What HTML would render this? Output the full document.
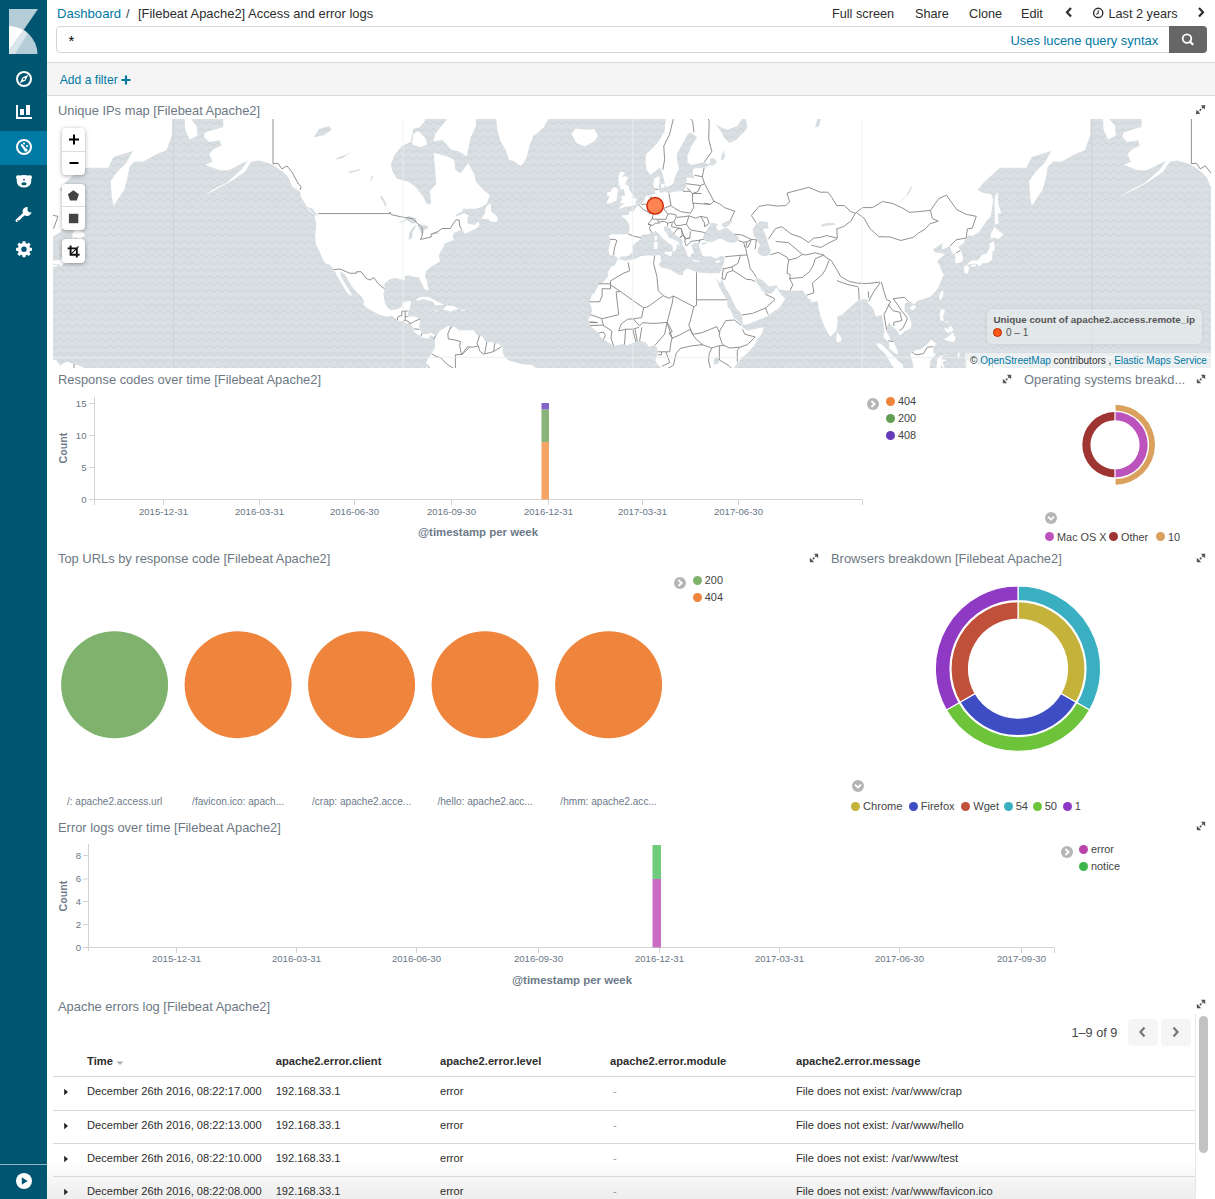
<!DOCTYPE html>
<html><head><meta charset="utf-8">
<style>
*{box-sizing:border-box}
html,body{margin:0;padding:0}
body{width:1215px;height:1199px;overflow:hidden;position:relative;background:#fff;font-family:"Liberation Sans",sans-serif;color:#3f3f3f}
.a{position:absolute;white-space:nowrap}
.nav{position:absolute;left:0;top:0;width:47px;height:1199px;background:#005571}
.navact{position:absolute;left:0;top:131px;width:47px;height:34px;background:#0079a5}
.navsep{position:absolute;left:0;top:1164px;width:47px;height:1px;background:#2b7b95}
.ptitle{position:absolute;white-space:nowrap;font-size:12.9px;line-height:13px;color:#6d7883}
.tick{font-size:9.6px;line-height:10px;color:#697786}
.expand{position:absolute;width:10px;height:10px}
.leg{position:absolute;white-space:nowrap;font-size:10.4px;line-height:11px;color:#3f3f3f}
.dot{position:absolute;width:9px;height:9px;border-radius:50%}
.tog{position:absolute;width:12px;height:12px;border-radius:50%;background:#b4b4b4}
</style></head><body>
<!-- SIDEBAR -->
<div class="nav"></div>
<div class="navact"></div>
<div class="navsep"></div>
<svg class="a" style="left:0;top:0" width="47" height="1199" viewBox="0 0 47 1199">
  <!-- logo -->
  <path d="M9 9 L38 9 L23.6 30 Q16.5 26 9 26 Z" fill="#b5cdd6"/>
  <path d="M9 26 A28.5 28.5 0 0 1 37.5 54 L9 54 Z" fill="#b5cdd6"/>
  <path d="M9 26 Q16.5 26 23.6 30 L9 50 Z" fill="#ffffff"/>
  <path d="M23.6 30 Q25.8 31.6 27.5 34 L15 54 L9 54 L9 50 Z" fill="#d9e5ea"/>
  <!-- compass -->
  <circle cx="24" cy="79" r="7" fill="none" stroke="#fff" stroke-width="2"/>
  <path d="M28.2 74.8 L25.6 80.6 L19.8 83.2 L22.4 77.4 Z" fill="#fff"/>
  <circle cx="24" cy="79" r="1" fill="#005571"/>
  <!-- bar chart -->
  <path d="M16 105 L18 105 L18 117 L32 117 L32 119 L16 119 Z" fill="#fff"/>
  <rect x="20" y="109" width="4" height="6" fill="#fff"/>
  <rect x="26" y="105" width="4" height="10" fill="#fff"/>
  <!-- dashboard -->
  <circle cx="24" cy="147" r="7" fill="none" stroke="#fff" stroke-width="2"/>
  <path d="M20.5 145 L22 143.8 L25.8 148.2 A1.8 1.8 0 1 1 24 150 Z" fill="#fff"/>
  <circle cx="24" cy="143.5" r="1.1" fill="#fff"/>
  <circle cx="27" cy="146" r="1.1" fill="#fff"/>
  <!-- bear -->
  <path d="M16.3 176 Q17 175 19.5 175.5 Q24 174.5 28.5 175.5 Q31 175 31.7 176 Q32.3 178 31.2 179.5 Q31.5 184 29 186 Q24 189 19 186 Q16.5 184 16.8 179.5 Q15.7 178 16.3 176 Z" fill="#fff"/>
  <ellipse cx="24" cy="183.8" rx="2.6" ry="1.5" fill="#005571"/>
  <ellipse cx="24" cy="179.8" rx="1.2" ry="0.7" fill="#005571"/>
  <!-- wrench -->
  <path d="M17 220.5 L24.5 213.5" stroke="#fff" stroke-width="3" stroke-linecap="round"/>
  <path d="M27.5 207 A4.5 4.5 0 1 0 31.5 212 L29.5 212.4 L27.4 210.5 L27.7 208.5 Z" fill="#fff"/>
  <circle cx="18" cy="220.7" r="0.7" fill="#005571"/>
  <!-- gear -->
  <g transform="translate(24 249.3)" fill="#fff">
    <circle r="6.2"/>
    <rect x="-1.6" y="-8" width="3.2" height="16" rx="0.8"/>
    <rect x="-1.6" y="-8" width="3.2" height="16" rx="0.8" transform="rotate(45)"/>
    <rect x="-1.6" y="-8" width="3.2" height="16" rx="0.8" transform="rotate(90)"/>
    <rect x="-1.6" y="-8" width="3.2" height="16" rx="0.8" transform="rotate(135)"/>
    <circle r="2.7" fill="#005571"/>
  </g>
  <!-- play -->
  <circle cx="24" cy="1181" r="8" fill="#fff"/>
  <path d="M21.8 1177.3 L27.6 1181 L21.8 1184.7 Z" fill="#005571"/>
</svg>

<!-- HEADER -->
<div class="a" style="left:57px;top:7px;font-size:13.1px;line-height:14px;color:#0079a5">Dashboard</div>
<div class="a" style="left:126px;top:7px;font-size:13px;line-height:14px;color:#3f3f3f">/</div>
<div class="a" style="left:138px;top:7px;font-size:12.95px;line-height:14px;color:#2d2d2d">[Filebeat Apache2] Access and error logs</div>
<div class="a" style="left:832px;top:7px;font-size:12.7px;line-height:14px;color:#2d2d2d">Full screen</div>
<div class="a" style="left:915px;top:7px;font-size:12.7px;line-height:14px;color:#2d2d2d">Share</div>
<div class="a" style="left:969px;top:7px;font-size:12.7px;line-height:14px;color:#2d2d2d">Clone</div>
<div class="a" style="left:1021px;top:7px;font-size:12.7px;line-height:14px;color:#2d2d2d">Edit</div>
<div class="a" style="left:1108.5px;top:7px;font-size:12.7px;line-height:14px;color:#2d2d2d">Last 2 years</div>
<svg class="a" style="left:1060px;top:4px" width="155" height="18" viewBox="1060 4 155 18">
  <path d="M1071 8 L1067 12.3 L1071 16.6" fill="none" stroke="#2d2d2d" stroke-width="2.2"/>
  <path d="M1199 8 L1203 12.3 L1199 16.6" fill="none" stroke="#2d2d2d" stroke-width="2.2"/>
  <circle cx="1098.2" cy="12.9" r="4.6" fill="none" stroke="#2d2d2d" stroke-width="1.4"/>
  <path d="M1098.2 10.3 L1098.2 13.2 L1096.2 14.4" fill="none" stroke="#2d2d2d" stroke-width="1.1"/>
</svg>
<!-- query bar -->
<div class="a" style="left:56px;top:26px;width:1116px;height:27px;border:1px solid #d4d4d4;border-radius:4px 0 0 4px;background:#fff"></div>
<div class="a" style="left:68.5px;top:32.5px;font-size:15px;line-height:15px;color:#000">*</div>
<div class="a" style="left:1010.5px;top:34px;font-size:12.9px;line-height:14px;color:#0079a5">Uses lucene query syntax</div>
<div class="a" style="left:1169px;top:26px;width:38px;height:27px;background:#666;border-radius:0 4px 4px 0"></div>
<svg class="a" style="left:1178px;top:30px" width="20" height="20" viewBox="0 0 20 20">
  <circle cx="9" cy="8.6" r="4.3" fill="none" stroke="#fff" stroke-width="1.8"/>
  <path d="M12 11.6 L14.6 14.2" stroke="#fff" stroke-width="2.2" stroke-linecap="round"/>
</svg>
<!-- filter bar -->
<div class="a" style="left:47px;top:62px;width:1168px;height:34px;background:#f5f5f5;border-top:1px solid #d9d9d9;border-bottom:1px solid #d9d9d9"></div>
<div class="a" style="left:59.7px;top:74px;font-size:12.15px;line-height:13px;color:#0079a5">Add a filter</div>
<svg class="a" style="left:120.5px;top:74.5px" width="10" height="10" viewBox="0 0 10 10"><path d="M5 0.5 V9.5 M0.5 5 H9.5" stroke="#0079a5" stroke-width="2.2"/></svg>

<!-- MAP PANEL -->
<div class="ptitle" style="left:58px;top:104px">Unique IPs map [Filebeat Apache2]</div>
<div class="a" style="left:53px;top:119px;width:1158px;height:249px;overflow:hidden;background:#d5dbde">
<svg style="position:absolute;left:0;top:0" width="1158" height="249" viewBox="53 119 1158 249">
<rect x="53" y="119" width="1158" height="249" fill="url(#wav)"/>
<defs><pattern id="wav" patternUnits="userSpaceOnUse" width="8.3" height="7" x="0" y="0"><rect width="8.3" height="7" fill="#d9dfe2"/><path d="M-0.1 4.2 Q2.07 1.6 4.15 4.2 T8.4 4.2" fill="none" stroke="#d0d7db" stroke-width="1.1"/></pattern>
<g id="wld">
<path d="M223.3 61.0 L223.2 126.9 L205.5 132.3 L203.8 136.7 L209.1 142.0 L219.7 140.3 L221.5 145.6 L212.6 150.0 L209.1 154.4 L212.6 161.5 L205.5 165.0 L219.7 170.3 L228.5 170.3 L235.6 166.8 L248.0 160.6 L240.9 170.3 L226.8 182.7 L212.6 189.8 L202.0 196.9 L205.5 195.1 L228.5 182.7 L244.5 172.1 L251.6 161.5 L258.6 160.6 L269.3 163.3 L276.8 167.4 L283.2 172.3 L288.3 177.2 L292.1 186.4 L300.3 191.7 L301.1 197.3 L306.2 205.6 L306.2 206.4 L313.8 214.0 L314.6 215.9 L316.4 223.8 L315.1 236.3 L315.9 244.5 L320.2 253.1 L321.7 256.9 L325.0 263.2 L330.4 265.1 L334.0 269.3 L336.8 275.6 L341.4 282.9 L346.5 292.0 L352.3 297.3 L351.1 293.7 L346.5 285.8 L341.9 278.6 L339.8 271.7 L344.4 273.5 L349.8 283.2 L354.6 290.1 L361.3 296.5 L364.1 301.2 L363.3 304.5 L366.6 307.7 L373.8 311.8 L377.9 313.9 L386.5 316.8 L391.6 315.5 L397.5 320.0 L405.7 322.9 L409.5 323.9 L413.3 327.9 L413.8 331.8 L419.4 335.6 L424.8 338.2 L428.6 338.7 L429.9 334.9 L433.7 336.4 L435.0 339.5 L435.0 347.2 L431.7 353.6 L428.4 357.4 L426.1 363.0 L428.6 365.1 L425.3 368.9 L426.1 377.9 L543.4 377.9 L543.4 371.5 L538.3 369.7 L531.9 365.1 L526.8 364.8 L520.5 363.8 L509.0 360.5 L505.2 357.4 L502.6 352.3 L502.6 347.2 L498.8 344.1 L492.4 342.3 L486.0 342.1 L482.2 336.4 L477.6 335.6 L473.3 330.2 L469.4 330.2 L464.3 330.2 L459.2 330.5 L454.1 326.6 L450.0 329.2 L449.0 325.5 L443.9 328.6 L440.1 330.7 L436.8 335.6 L435.0 335.1 L431.2 333.0 L427.3 334.1 L423.5 334.3 L419.7 329.7 L419.2 325.2 L420.5 318.7 L413.3 316.3 L407.7 316.8 L407.7 312.0 L409.5 309.4 L411.3 301.2 L406.9 301.2 L402.3 302.6 L401.8 306.7 L398.0 309.1 L391.6 310.2 L387.8 308.0 L384.7 302.6 L383.5 294.3 L384.7 288.9 L384.2 283.8 L390.4 279.1 L395.5 278.0 L400.6 279.4 L405.2 280.0 L404.4 276.5 L408.2 275.3 L414.6 277.1 L418.4 277.1 L422.0 283.5 L424.0 288.4 L427.6 290.9 L428.4 289.2 L427.1 281.5 L425.0 275.6 L426.3 271.1 L431.2 266.6 L434.0 265.1 L440.1 261.3 L438.8 255.6 L440.6 251.5 L443.7 246.5 L443.9 243.9 L449.0 241.8 L454.1 239.8 L452.6 237.0 L453.6 233.2 L461.8 229.3 L465.1 233.9 L477.1 227.8 L479.6 224.9 L478.4 221.2 L474.5 224.9 L467.7 223.4 L467.4 218.2 L468.9 215.5 L464.3 213.2 L456.7 216.3 L455.7 215.1 L462.3 211.2 L463.1 208.8 L475.8 208.8 L482.2 206.8 L486.8 203.6 L489.8 195.2 L482.2 188.7 L475.8 181.8 L474.5 174.8 L468.2 163.3 L460.5 173.3 L455.4 169.9 L454.1 159.7 L449.0 157.0 L433.7 152.7 L434.7 164.9 L436.3 184.1 L429.9 190.9 L431.2 203.6 L427.3 204.4 L423.5 197.3 L415.9 187.3 L408.2 181.8 L396.7 178.6 L392.4 170.9 L390.9 164.9 L394.2 155.4 L401.8 146.0 L410.8 141.9 L413.3 129.1 L419.7 127.2 L424.8 121.3 L426.1 61.0ZM520.7 165.9 L523.0 163.8 L526.8 157.0 L529.4 146.0 L533.2 135.9 L536.8 133.5 L543.4 127.8 L549.8 116.6 L568.9 111.0 L568.9 61.0 L479.6 61.0 L492.4 103.7 L496.2 117.9 L497.5 131.0 L500.8 141.9 L505.2 148.8 L509.0 159.7 L514.1 161.2 L517.9 164.3ZM576.6 143.1 L571.5 134.1 L575.3 128.5 L586.8 129.7 L594.4 129.1 L598.0 135.9 L594.4 141.3 L585.0 146.5 L579.1 144.2ZM475.8 125.9 L470.7 137.2 L467.7 151.6 L466.9 156.5 L459.2 151.6 L451.6 149.9 L442.7 140.1 L433.7 141.3 L435.0 134.1 L446.5 120.0 L446.5 61.0 L477.1 61.0ZM427.3 144.2 L421.0 147.1 L412.0 144.8 L413.3 134.1 L418.4 131.0 L424.8 137.2ZM481.4 218.9 L484.7 213.6 L486.0 206.8 L490.9 203.2 L491.1 211.6 L496.0 215.5 L498.3 219.3 L496.2 222.3 L490.1 221.2 L488.6 218.9ZM415.9 300.1 L418.4 297.9 L422.5 296.8 L428.6 297.1 L435.0 300.4 L439.6 302.6 L443.7 304.8 L435.3 305.6 L432.4 301.2 L427.3 300.4 L423.5 299.0 L418.4 300.4ZM442.7 309.6 L447.0 305.6 L454.1 306.1 L458.5 309.1 L454.4 309.9 L450.3 311.8 L446.5 310.2ZM433.0 309.9 L438.3 310.7 L435.8 311.5ZM461.3 309.4 L465.4 309.9 L464.3 310.7 L461.3 310.7ZM306.2 206.4 L312.5 208.4 L318.2 215.9 L314.6 215.1 L308.7 210.4ZM645.5 61.0 L668.4 111.0 L665.9 117.9 L664.6 131.0 L659.5 140.1 L653.1 147.7 L646.0 154.3 L645.5 162.3 L646.7 169.9 L650.6 174.8 L656.9 169.9 L659.5 167.4 L661.3 169.9 L662.8 174.8 L664.8 183.2 L665.9 186.9 L669.7 186.0 L673.5 183.2 L674.8 177.2 L679.1 168.4 L677.3 162.3 L676.8 154.3 L681.2 146.0 L687.5 134.7 L690.1 132.3 L697.2 137.2 L691.4 146.0 L687.5 155.4 L687.5 162.3 L691.1 164.9 L696.5 163.8 L704.1 162.3 L709.7 164.9 L705.4 167.4 L693.9 168.4 L692.6 171.9 L694.4 178.6 L686.8 177.2 L686.3 184.1 L686.5 185.5 L683.7 190.9 L680.4 191.3 L673.5 191.7 L668.9 193.5 L664.6 191.3 L660.5 193.3 L658.2 189.5 L659.5 182.8 L659.7 176.2 L658.0 176.7 L653.9 179.1 L653.4 186.0 L654.6 189.1 L655.4 193.5 L650.6 195.2 L645.5 196.1 L644.7 199.4 L641.6 204.0 L639.1 205.2 L636.8 206.4 L633.0 211.6 L629.4 211.2 L628.9 214.7 L620.7 215.5 L626.3 220.1 L629.6 224.9 L629.4 230.3 L628.6 234.2 L623.0 234.2 L611.3 234.2 L609.0 235.6 L610.5 241.8 L608.5 250.2 L609.7 255.6 L613.6 255.0 L616.6 257.2 L618.4 258.8 L621.5 256.6 L627.6 256.3 L630.9 253.7 L633.2 249.8 L631.9 247.5 L634.7 243.5 L638.3 241.2 L640.9 238.4 L640.6 235.6 L644.2 234.2 L646.5 234.6 L651.3 233.2 L655.4 230.7 L659.0 233.9 L662.0 237.7 L664.6 240.1 L668.9 243.2 L672.5 245.5 L672.8 251.8 L675.0 250.8 L676.6 248.8 L676.6 244.2 L679.9 245.5 L678.6 241.8 L673.5 239.4 L668.9 237.7 L667.4 233.9 L664.1 230.3 L664.1 226.7 L667.6 226.4 L667.4 228.5 L669.7 227.5 L673.5 233.9 L678.6 237.0 L682.2 239.8 L682.4 244.2 L684.2 247.5 L686.3 251.5 L687.8 256.3 L690.1 257.6 L691.4 254.0 L693.9 252.4 L691.1 245.2 L695.2 242.8 L699.0 243.2 L699.5 247.5 L701.1 251.1 L702.3 255.6 L704.6 256.6 L710.8 256.3 L715.6 258.5 L720.7 256.3 L724.5 256.3 L724.3 260.4 L723.3 265.1 L721.7 268.7 L719.9 273.2 L721.7 278.6 L725.8 288.7 L729.6 294.3 L732.7 301.2 L736.0 308.0 L741.4 313.6 L743.2 324.7 L747.5 324.5 L755.1 321.3 L765.9 317.1 L773.0 312.0 L778.6 308.3 L781.9 303.9 L785.2 298.5 L781.9 295.4 L776.3 287.5 L773.8 290.9 L771.2 293.7 L764.3 293.7 L763.3 288.4 L762.3 292.3 L760.2 287.2 L756.4 282.1 L755.1 278.6 L756.4 277.4 L761.0 279.4 L762.3 280.3 L769.2 286.4 L776.3 285.2 L778.9 289.5 L789.6 290.9 L802.6 290.4 L803.6 292.0 L806.2 295.1 L808.2 298.7 L810.0 298.7 L811.8 302.6 L817.9 300.9 L818.4 308.0 L821.0 317.4 L823.5 324.2 L827.3 332.0 L830.4 336.7 L832.2 334.6 L836.3 331.0 L837.5 323.7 L837.3 316.6 L842.6 314.4 L847.0 309.9 L854.4 303.4 L858.0 300.4 L863.6 299.3 L866.9 299.0 L868.2 303.4 L873.0 308.5 L875.8 316.6 L881.7 314.7 L883.2 322.6 L884.5 331.8 L883.5 337.2 L888.6 342.1 L889.3 348.5 L891.1 350.3 L896.7 354.1 L898.5 353.8 L896.2 347.7 L893.4 341.5 L890.4 339.8 L888.6 335.6 L885.8 331.0 L887.5 325.2 L889.1 322.6 L891.1 325.0 L896.7 330.2 L900.0 335.4 L904.9 331.0 L911.3 327.9 L911.3 321.8 L909.0 316.0 L904.4 310.7 L904.9 303.4 L909.5 300.9 L914.1 304.5 L917.1 300.9 L922.2 299.3 L929.9 297.1 L934.2 292.9 L937.5 288.7 L940.1 282.9 L943.7 274.7 L941.1 269.3 L939.3 264.1 L937.0 262.0 L939.6 258.8 L945.2 254.4 L940.4 253.1 L935.0 252.4 L933.0 249.5 L937.5 246.5 L942.6 242.8 L941.9 249.8 L949.8 246.2 L952.1 253.1 L955.4 254.0 L955.1 262.6 L958.0 263.2 L962.3 261.3 L963.1 257.2 L960.8 250.8 L958.0 246.5 L963.6 243.2 L966.1 238.1 L969.2 235.3 L972.2 236.3 L978.4 232.5 L985.2 223.1 L990.9 215.9 L993.2 199.9 L991.1 193.9 L983.5 193.0 L977.6 190.0 L984.0 182.3 L991.1 175.7 L1000.0 167.7 L1026.5 167.7 L1031.9 157.1 L1051.3 150.9 L1044.3 163.3 L1035.4 172.1 L1029.2 181.0 L1030.1 196.9 L1031.9 205.7 L1042.5 189.8 L1046.0 177.4 L1047.8 166.8 L1053.1 161.5 L1062.0 161.5 L1074.3 154.4 L1085.0 150.0 L1090.3 134.9 L1090.6 61.0ZM1102.7 111.0 L1115.0 126.1 L1115.9 135.8 L1108.0 139.4 L1103.5 129.6ZM617.6 259.5 L615.1 265.1 L610.8 267.2 L607.7 272.6 L608.2 275.9 L603.4 282.1 L599.0 284.4 L594.4 292.9 L591.9 295.1 L589.3 302.6 L591.4 306.7 L591.9 310.7 L590.6 316.0 L588.1 319.5 L589.8 322.6 L590.1 325.8 L593.2 328.6 L595.7 330.5 L599.0 333.0 L600.8 337.4 L604.6 340.0 L608.5 342.6 L613.3 346.2 L622.5 344.1 L627.6 345.1 L632.2 343.3 L636.5 341.5 L639.1 341.0 L641.4 341.0 L645.5 342.3 L648.5 346.4 L651.8 345.9 L653.9 344.9 L656.9 347.4 L657.7 351.0 L656.9 354.8 L656.4 357.4 L655.1 360.0 L657.4 364.5 L660.8 367.4 L663.3 370.2 L663.3 377.9 L733.0 377.9 L733.0 372.7 L734.0 367.7 L737.0 363.3 L741.1 358.7 L748.3 352.3 L753.9 345.9 L757.7 339.5 L762.3 333.0 L763.6 327.1 L757.7 328.4 L747.5 330.7 L742.6 327.6 L741.9 325.2 L737.3 320.0 L733.5 317.4 L730.9 310.7 L727.6 306.4 L726.8 299.8 L723.5 294.6 L719.4 287.2 L715.9 277.4 L720.2 283.5 L721.7 278.6 L719.9 273.2 L715.1 273.2 L709.0 273.5 L697.0 272.3 L693.9 270.8 L687.5 268.4 L684.0 270.8 L682.4 275.6 L678.6 274.7 L671.7 270.2 L666.4 268.4 L661.0 267.5 L658.5 264.4 L661.0 261.3 L660.5 256.0 L658.2 254.7 L654.6 256.0 L649.3 255.3 L640.4 256.3 L634.0 259.5 L631.2 259.8 L625.3 261.0 L619.2 259.1ZM618.2 209.2 L622.0 208.0 L625.0 206.8 L629.4 206.4 L636.3 204.8 L635.0 203.6 L637.2 199.4 L633.5 197.8 L633.0 194.8 L629.6 190.4 L628.6 186.0 L625.0 184.1 L626.1 181.8 L628.1 177.2 L624.8 176.2 L622.0 177.2 L625.0 171.9 L619.9 171.9 L618.2 177.2 L618.7 182.8 L618.4 187.3 L620.5 184.6 L619.9 189.5 L623.8 189.1 L624.5 192.6 L625.0 196.1 L621.0 196.1 L621.5 198.2 L622.5 199.4 L619.4 201.9 L622.5 203.2 L625.0 203.6 L622.0 204.8ZM616.6 200.7 L617.1 196.1 L618.4 190.9 L616.9 187.8 L614.1 186.9 L611.0 189.5 L611.0 191.7 L607.2 192.2 L607.2 195.6 L609.7 196.5 L607.4 201.1 L606.4 202.4 L608.2 203.6 L611.0 203.2 L613.6 201.5ZM966.6 265.1 L968.2 263.2 L972.0 260.4 L978.4 260.1 L981.7 255.0 L986.0 254.0 L987.3 252.8 L989.8 247.5 L989.8 243.2 L993.7 241.2 L994.7 245.9 L994.7 250.2 L992.4 251.5 L992.4 256.6 L991.9 259.8 L989.3 262.0 L986.8 263.2 L982.2 263.2 L981.9 264.1 L979.1 266.6 L977.3 264.1 L973.3 263.8 L969.4 264.4ZM964.3 266.6 L963.8 268.7 L964.8 273.2 L966.9 274.1 L968.4 271.7 L969.2 267.5 L966.9 265.1ZM970.7 267.2 L976.3 265.7 L975.8 264.4 L972.0 264.7ZM989.8 240.8 L991.1 237.0 L990.6 234.6 L994.4 226.7 L998.8 231.1 L1003.9 234.6 L998.3 239.1 L993.7 237.4 L991.4 238.4ZM994.9 224.9 L998.8 223.1 L997.5 213.6 L1001.3 213.6 L998.3 203.6 L997.5 191.3 L995.5 195.2 L994.4 201.5 L994.9 217.4 L994.7 224.2ZM939.3 298.5 L939.1 295.7 L941.4 290.9 L943.7 291.5 L942.6 297.1 L940.9 300.1ZM909.7 307.5 L913.3 305.0 L915.9 306.1 L914.6 309.1 L912.0 310.2ZM940.4 309.4 L944.7 309.6 L944.4 313.4 L942.9 316.6 L943.9 321.1 L949.5 323.9 L947.2 321.6 L942.6 320.8 L940.4 320.5 L939.6 316.0ZM943.9 327.1 L947.7 329.2 L950.3 325.2 L953.4 329.2 L951.6 331.8 L947.7 333.0 L945.2 330.5ZM943.9 339.5 L947.7 336.9 L952.9 332.5 L955.7 338.7 L954.1 342.1 L949.0 341.3ZM910.8 353.6 L912.3 352.3 L915.9 350.3 L921.0 349.2 L927.3 344.1 L931.2 339.5 L936.8 343.9 L933.7 346.2 L933.2 352.3 L936.0 354.8 L932.4 357.4 L930.4 361.2 L929.9 366.3 L928.6 372.7 L913.3 372.7 L913.3 365.1 L912.3 361.2 L910.5 356.1ZM875.8 343.1 L881.4 344.1 L888.6 351.0 L897.2 360.0 L903.1 365.1 L903.1 372.7 L899.3 372.7 L891.6 365.1 L888.6 359.4 L884.5 353.1 L878.6 347.7ZM936.3 370.2 L937.3 358.7 L940.1 356.1 L951.6 353.6 L943.9 354.8 L941.4 359.4 L947.2 360.0 L942.6 362.0 L945.2 370.2 L941.4 365.1 L939.8 371.5ZM966.9 360.5 L974.5 359.7 L978.4 365.8 L984.7 361.5 L992.4 364.0 L1001.3 367.1 L1005.1 370.2 L1010.2 372.7 L966.9 372.7ZM958.0 352.3 L959.7 353.6 L959.2 357.4 L958.5 359.4 L957.4 356.1ZM836.3 342.1 L836.5 335.6 L837.3 332.3 L839.8 335.6 L841.6 338.7 L840.6 341.5 L838.3 342.3ZM664.3 252.1 L672.5 251.5 L671.2 256.6 L664.6 253.7ZM653.6 242.5 L657.7 241.8 L657.2 248.8 L654.4 249.5ZM654.6 236.0 L656.9 235.6 L656.9 239.4 L655.9 241.2 L654.6 239.4ZM692.6 260.1 L699.8 261.0 L699.0 262.0 L692.9 261.3ZM715.1 261.6 L721.0 259.8 L719.4 262.3 L715.9 262.9ZM660.8 184.6 L664.8 184.1 L664.3 187.8 L661.3 187.8Z" fill="#fff"/>
<path d="M752.6 230.3 L755.1 224.9 L759.0 221.9 L760.2 221.2 L767.9 221.9 L768.4 228.5 L763.3 228.5 L763.6 230.3 L766.6 237.4 L767.9 243.2 L770.5 249.8 L770.5 254.7 L762.8 256.6 L758.7 254.0 L757.4 251.1 L760.0 244.5 L756.4 239.8 L753.9 235.6ZM706.7 241.8 L713.1 241.8 L718.2 239.1 L722.0 239.1 L728.4 242.5 L734.0 242.5 L738.6 240.8 L738.8 237.0 L734.0 233.9 L729.1 229.6 L726.1 227.8 L723.3 228.5 L719.4 230.7 L717.9 230.0 L715.6 227.1 L718.4 224.9 L714.3 223.1 L711.3 223.1 L708.5 227.5 L705.7 231.4 L703.9 234.9 L702.9 237.4 L704.9 240.8ZM721.5 224.9 L723.3 227.1 L726.1 227.5 L730.1 224.2 L732.7 220.4 L728.4 220.8 L722.8 223.1ZM700.3 244.5 L702.9 242.7 L706.7 242.5 L707.4 243.5 L704.1 244.5ZM715.4 123.9 L720.7 127.2 L727.1 129.7 L737.3 125.9 L744.9 114.5 L747.5 127.8 L744.9 131.0 L736.0 140.1 L729.6 143.1 L724.5 138.4 L721.5 132.3ZM815.1 127.8 L818.9 126.5 L821.5 117.9 L824.0 88.0 L816.4 88.0 L817.6 117.9ZM397.8 222.3 L403.1 221.2 L408.2 215.5 L415.9 218.2 L417.1 223.1 L412.0 223.4 L406.9 220.1 L401.8 222.7ZM408.5 240.1 L409.5 232.1 L414.6 225.6 L416.4 225.6 L412.8 232.1 L412.0 238.4ZM417.1 225.3 L422.5 235.6 L424.3 230.3 L427.3 228.5 L428.6 226.7 L424.8 224.9 L418.4 224.2ZM419.9 240.1 L431.2 236.3 L427.3 237.4 L422.2 239.4ZM429.1 234.6 L438.3 233.9 L437.5 231.4 L430.2 233.2ZM385.3 207.6 L386.5 203.6 L381.4 195.2 L380.2 197.3 L384.0 203.6ZM334.2 159.7 L339.3 157.0 L347.0 154.3 L354.6 149.9 L349.5 153.2 L341.9 158.6ZM313.8 137.2 L318.9 129.1 L329.1 125.9 L331.7 129.7 L324.0 135.3ZM348.3 171.9 L359.7 168.9 L361.0 169.9 L349.5 173.3ZM369.9 181.8 L372.0 174.8 L373.3 177.2ZM898.0 203.2 L903.1 199.4 L909.5 193.0 L912.8 185.5 L911.3 186.4 L905.7 196.5 L899.3 201.9ZM820.2 224.9 L826.6 223.1 L834.2 223.1 L835.0 224.9 L827.9 225.6 L822.7 226.7ZM709.2 164.9 L710.5 158.6 L714.3 158.6 L716.9 162.3 L713.1 165.4ZM720.7 159.7 L723.3 149.9 L725.0 155.4 L723.3 159.7ZM713.6 365.1 L714.3 358.2 L718.2 356.4 L719.9 358.2 L718.2 363.8Z" fill="url(#wav)"/>
<path d="M318.2 213.6 L390.0 213.6 L389.8 212.0 L391.4 214.7 L400.6 216.7 L404.4 217.4 L413.3 218.9 L417.1 223.1 L422.2 227.5 L422.2 235.6 L420.5 239.4 L431.2 237.0 L431.2 234.6 L438.1 231.4 L442.1 228.5 L450.3 228.5 L453.6 223.1 L456.2 219.7 L459.2 220.1 L459.7 226.0 L461.8 229.3M273.0 61.0 L273.0 163.8 L278.1 163.3 L281.9 168.9 L287.0 165.9 L292.1 172.3 L298.5 184.1 L301.1 186.4 L300.3 190.0M334.0 269.6 L340.1 269.0 L349.5 273.2 L356.7 273.2 L356.7 271.7 L361.0 271.7 L366.1 278.3 L369.9 280.0 L373.8 277.7 L378.9 284.4 L384.7 288.9M397.5 320.0 L397.5 317.9 L398.8 316.0 L401.8 315.8 L401.8 311.2 L405.2 311.2 L407.7 311.0M405.2 311.2 L405.2 316.3 L407.7 316.8M405.2 316.3 L405.2 320.0 L402.9 322.1M405.2 320.3 L409.0 321.8 L410.0 324.2M410.0 323.9 L414.6 321.3 L420.5 318.7M414.1 328.9 L419.2 329.4M421.0 336.1 L422.0 332.8M434.0 339.0 L435.8 335.4M450.8 327.1 L447.8 333.8 L448.3 339.0 L454.1 339.8 L460.5 341.5 L459.7 345.9 L461.0 352.3 L462.0 354.3M431.7 353.8 L436.3 356.6 L440.6 357.7 L446.5 363.8 L454.1 368.9M428.1 366.1 L431.2 370.2M479.6 335.6 L477.1 343.3 L477.9 345.6M486.8 342.1 L484.7 353.6M494.9 342.8 L493.7 351.0M501.3 346.7 L493.7 351.5 L489.8 352.6 L483.5 354.1 L479.6 351.0 L478.4 345.9 L472.5 347.2 L467.4 346.7 L462.0 354.3 L455.4 354.8 L455.4 368.9M610.0 239.4 L614.8 239.4 L616.9 240.5 L614.8 246.9 L614.1 250.8 L613.6 255.0M628.6 234.2 L634.5 236.3 L640.9 237.7M639.1 205.2 L643.4 209.6 L647.5 211.6 L649.0 213.2 L653.6 213.6 L652.1 218.9 L648.0 224.2 L650.6 225.3 L649.5 228.5 L651.8 232.8M641.4 204.4 L645.5 204.0 L647.8 206.4M651.1 196.1 L649.8 201.5 L648.0 206.4 L648.3 209.2 L647.5 211.6M654.6 189.1 L658.0 189.5M668.9 193.5 L669.9 199.0 L671.0 205.6 L663.6 208.4 L667.9 214.3 L665.9 219.3 L657.2 219.3 L652.1 218.9M648.0 224.2 L652.6 225.3 L655.7 223.1 L659.5 223.1 L657.2 219.3M659.5 221.9 L664.1 221.2 L667.6 223.1 L667.6 226.4M671.0 205.6 L674.8 208.4 L680.7 211.6 L690.4 213.2M667.9 214.3 L671.0 213.6 L676.1 215.1 L676.1 217.4 L673.8 221.9 L667.6 223.1M676.6 217.4 L683.7 216.7 L689.1 215.9 L686.3 224.2 L680.7 225.3 L676.1 225.6 L673.8 221.9M672.2 223.1 L671.5 226.7 L681.2 228.5 L682.4 235.6 L679.9 237.4M681.2 228.5 L682.4 232.1 L685.0 239.1 L685.0 242.5 L686.3 245.9 L691.1 241.5 L695.2 240.8 L699.8 240.1 L704.1 239.1M690.4 231.4 L689.8 238.1 L686.3 238.4M686.3 224.2 L690.4 230.0 L702.9 232.1 L705.7 233.2M685.0 239.1 L689.8 238.1M699.0 243.2 L699.8 240.1M690.6 191.7 L692.6 193.5 L692.6 201.5 L693.9 207.2 L690.4 213.2M683.0 191.3 L690.6 191.3 L687.0 187.8M686.3 183.7 L700.6 185.5M694.7 175.3 L702.3 176.7 L704.1 167.9M692.6 193.5 L697.8 191.7 L700.6 185.5 L704.6 183.7 L702.3 176.7M704.6 183.7 L713.8 201.1M692.9 203.2 L710.5 204.4 L713.8 201.1 L720.5 204.4 L724.5 207.6 L734.7 211.2 L730.1 220.8M689.1 215.9 L696.0 218.2 L700.6 216.3 L704.6 223.1 L704.6 226.7M700.6 216.3 L707.2 217.8 L709.2 223.4 L704.6 226.7M662.8 169.9 L664.6 159.7 L663.8 146.0 L669.7 134.1 L673.5 117.9 L679.9 111.0M693.9 132.3 L692.6 121.3 L685.0 111.0M704.1 162.3 L708.0 157.0 L711.8 151.6 L708.7 139.0 L709.2 121.3 L705.4 111.0M756.4 223.1 L751.3 215.5 L759.0 206.4 L767.9 204.8 L776.8 206.0 L785.8 205.6 L789.6 201.9 L787.0 193.0 L798.5 190.0 L808.7 187.3 L820.2 192.2 L827.9 192.2 L831.7 197.3 L836.8 205.6 L844.4 205.6 L850.8 211.6 L855.4 213.2M855.4 213.2 L862.3 207.6 L872.5 207.6 L882.7 201.5 L892.9 203.6 L903.1 208.4 L909.5 212.4 L918.4 211.6 L930.4 210.4M930.4 210.4 L938.8 198.6 L946.5 195.2 L956.7 209.6 L966.1 214.3 L976.3 216.3 L972.2 228.2 L967.4 228.9 L966.1 238.1M949.8 246.2 L956.2 239.8 L961.8 238.8 L966.1 238.1M955.9 253.1 L960.2 250.5M856.7 212.8 L864.1 218.2 L869.9 228.5 L878.9 236.7 L890.4 237.0 L900.6 240.5 L913.3 237.4 L918.2 233.2 L924.8 229.3 L929.9 223.8 L938.3 221.2 L932.4 218.6 L930.4 210.4M855.4 213.2 L850.8 221.2 L843.2 226.7 L836.8 228.9 L837.3 238.1 L826.6 235.6 L820.2 237.4 L813.8 238.1 L808.7 242.5 L801.1 237.4 L790.9 233.9 L781.9 226.7 L775.6 228.5 L768.4 239.1M770.5 254.7 L778.1 252.4 L787.0 257.2 L788.8 260.1 L797.2 257.9 L802.3 254.4 L805.7 255.0 L815.1 252.8 L823.8 255.0M775.6 241.5 L788.3 242.5 L802.3 254.4M811.3 245.2 L820.7 247.5 L826.6 244.2 L837.3 238.8M788.8 260.1 L787.8 265.1 L787.0 273.2 L790.4 274.7 L789.6 278.6 L792.9 284.9 L789.8 290.9M789.6 278.6 L802.3 277.4 L809.5 271.7 L813.3 265.4 L815.1 258.8 L823.8 255.0 L825.3 257.2 L831.2 260.4M806.7 295.1 L813.8 292.9 L812.5 282.9 L822.7 274.1 L825.3 269.6 L829.1 260.4M831.2 260.4 L836.8 269.6 L840.6 276.5 L849.5 281.5 L857.7 283.2 L867.4 283.5 L880.1 282.1M837.0 280.6 L847.0 284.4 L857.7 286.7M858.5 287.2 L859.2 299.8M868.4 291.5 L868.7 297.9M880.1 282.9 L873.8 291.5 L868.7 301.2M881.4 282.1 L884.0 291.5 L886.5 299.6 L890.6 301.5 L884.0 314.7 L886.5 329.7M893.2 298.7 L904.4 297.3 L908.2 301.2M888.1 304.2 L892.9 310.7 L900.0 312.3 L901.8 320.5 L893.7 322.4 L893.9 326.0M893.2 298.7 L898.0 305.3 L901.1 310.2 L906.9 317.4 L906.9 320.0 L902.6 328.6 L899.3 330.7M888.1 340.8 L893.2 341.5M745.7 247.9 L747.0 255.0 L748.8 262.0 L750.0 268.1 L754.4 274.1 L756.4 277.4M725.0 256.9 L729.6 256.3 L740.6 255.3 L747.0 255.0M740.6 255.3 L737.8 263.5 L731.7 266.9 L733.0 270.5 L727.1 272.6 L724.8 279.4 L721.7 278.6M733.0 270.5 L746.7 279.4 L751.3 279.7 L755.1 281.5M723.5 269.0 L731.7 266.9M723.3 267.8 L722.0 278.6M741.9 315.0 L752.6 313.4 L765.4 308.0 L774.8 299.8 L773.5 297.9 L765.4 294.3M765.4 308.0 L768.2 314.4M738.6 240.8 L743.7 242.2 L747.0 241.8 L751.3 239.4 L756.4 239.8M734.5 234.2 L741.1 234.9 L747.5 237.4 L751.3 239.4M745.7 247.9 L747.0 241.8M628.1 262.3 L629.6 270.8 L623.0 273.5 L610.5 280.9 L610.5 284.9 L620.5 291.5 L635.8 302.6 L643.7 307.7 L648.0 306.7 L663.3 295.7M610.5 283.8 L599.0 283.8M610.5 284.9 L610.5 288.9 L602.1 288.7 L602.1 296.0 L599.5 301.8 L589.3 301.8M620.5 291.5 L616.1 291.8 L618.7 314.7 L602.1 318.7 L590.6 314.7M601.6 319.2 L603.6 325.5 L611.8 331.0 L611.0 338.0 L613.6 346.2M654.6 256.0 L653.6 263.5 L656.9 276.5 L658.2 290.6 L663.3 295.7 L668.9 298.2 L673.3 296.0 L693.9 306.7 L696.5 305.3 L696.5 299.8M696.5 272.3 L696.5 299.8 L726.8 299.8M643.7 307.7 L641.6 317.6 L633.2 318.9 L638.3 324.7 L639.8 325.5 L642.9 322.6 L651.8 323.4 L658.2 323.2 L667.1 322.4M673.3 296.0 L672.2 303.1 L667.1 322.4 L664.6 334.3 L654.9 345.4M693.9 306.7 L690.1 321.3 L688.8 325.0 L692.6 334.3M672.2 338.2 L679.9 334.9 L690.1 329.4M669.7 351.8 L671.0 342.1 L672.2 338.2 L667.1 322.4M692.6 334.3 L701.6 332.8 L716.9 326.6 L719.4 332.8M701.6 344.6 L711.8 348.0 L719.4 345.6 L724.3 345.6M725.8 320.5 L719.9 330.5 L719.4 335.6 L722.0 343.3 L724.3 345.6M725.8 320.5 L734.7 320.0 L740.9 325.2M742.4 329.2 L744.9 334.3 L755.1 336.9 L747.5 344.6 L739.8 347.2M739.8 347.2 L737.3 350.3 L737.3 361.5M724.3 345.6 L729.6 348.0 L739.8 347.2M719.4 345.9 L719.4 354.3 L719.4 360.0 L728.9 365.6 L732.7 369.4M711.8 348.0 L709.2 353.6 L708.5 361.0 L710.5 368.9M680.1 348.5 L676.1 353.6 L673.5 365.1 L664.6 370.2M657.7 351.8 L661.5 351.8 L666.4 351.8 L669.7 351.8M661.5 351.8 L661.5 354.8 L657.7 354.8M665.9 351.8 L669.7 362.5 L662.0 366.3M680.1 348.5 L691.4 345.9 L702.6 344.6M632.7 329.2 L635.8 341.8M635.0 329.2 L637.3 341.5M641.9 327.3 L639.6 341.0M618.7 331.0 L625.6 329.2 L632.7 329.2 L639.1 327.3M618.7 331.0 L621.2 323.9 L627.6 319.2 L633.2 318.9M625.6 329.2 L624.5 344.4M603.4 339.5 L605.4 335.6 L603.4 332.0 L599.0 333.0M590.1 325.5 L602.1 325.2 L603.6 325.5M589.8 322.6 L597.5 322.6 L589.8 321.8M667.1 322.4 L669.7 326.6 L672.2 331.8 L668.9 333.0 L672.2 338.2M690.1 329.4 L692.6 334.3 L696.5 339.5 L702.6 344.6M912.3 352.3 L915.9 354.8 L923.5 353.6 L927.3 347.2 L933.2 346.7M992.4 364.0 L992.4 377.9M744.9 247.5 L743.7 242.2M751.3 239.4 L748.0 247.5 L747.0 246.9M756.4 239.8 L755.1 249.2M431.2 370.2 L440.1 370.2M462.0 354.3 L469.4 347.7M679.9 237.4 L682.4 235.6 L685.0 237.0 L686.3 238.4M673.5 233.9 L677.3 228.9 L681.2 228.5M692.6 193.5 L701.6 193.5M710.5 204.4 L704.1 203.2" fill="none" stroke="#858585" stroke-width="0.9"/>
</g></defs>
<use href="#wld" transform="translate(-918.36 0)"/>
<use href="#wld" transform="translate(0.00 0)"/>
<use href="#wld" transform="translate(918.36 0)"/>
<line x1="173.5" y1="119" x2="173.5" y2="368" stroke="#cbd1d5" stroke-width="0.9" opacity="0.8"/>
<line x1="403.1" y1="119" x2="403.1" y2="368" stroke="#eef1f2" stroke-width="0.9" opacity="0.8"/>
<line x1="632.7" y1="119" x2="632.7" y2="368" stroke="#eef1f2" stroke-width="0.9" opacity="0.8"/>
<line x1="862.3" y1="119" x2="862.3" y2="368" stroke="#eef1f2" stroke-width="0.9" opacity="0.8"/>
<line x1="1091.9" y1="119" x2="1091.9" y2="368" stroke="#cbd1d5" stroke-width="0.9" opacity="0.8"/>
<line x1="53" y1="357.4" x2="1211" y2="357.4" stroke="#e8ecee" stroke-width="0.8"/>
<circle cx="655.1" cy="205.8" r="8.2" fill="#fe8353" stroke="#d02a08" stroke-width="1.5"/>
</svg>
</div>

<!-- RESPONSE CODES -->
<div class="ptitle" style="left:58px;top:373px">Response codes over time [Filebeat Apache2]</div>

<!-- map overlays -->
<svg class="a" style="left:1194px;top:103px" width="14" height="14" viewBox="0 0 14 14"><g fill="#555"><path d="M11.2 2 L6.8 2.4 L10.8 6.4 Z"/><path d="M2 11.2 L2.4 6.8 L6.4 10.8 Z"/><path d="M9.6 3.6 L4.4 8.8" stroke="#555" stroke-width="1.6" stroke-dasharray="2.2 1.2"/></g></svg>
<div class="a" style="left:62px;top:128px;width:23px;height:47px;background:#fff;border-radius:4px;box-shadow:0 1px 4px rgba(0,0,0,.35)"></div>
<div class="a" style="left:62px;top:151px;width:23px;height:1px;background:#ddd"></div>
<div class="a" style="left:62px;top:184px;width:23px;height:46px;background:#fff;border-radius:4px;box-shadow:0 1px 4px rgba(0,0,0,.35)"></div>
<div class="a" style="left:62px;top:206px;width:23px;height:1px;background:#ddd"></div>
<div class="a" style="left:62px;top:239px;width:23px;height:24px;background:#fff;border-radius:4px;box-shadow:0 1px 4px rgba(0,0,0,.35)"></div>
<svg class="a" style="left:62px;top:128px" width="23" height="136" viewBox="62 128 23 136">
  <path d="M74 134.5 V144.5 M69 139.5 H79" stroke="#000" stroke-width="2"/>
  <path d="M69.5 163 H78.5" stroke="#000" stroke-width="2"/>
  <path d="M73.4 190.2 L78.9 194.2 L76.8 200.4 L70 200.4 L67.9 194.2 Z" fill="#444"/>
  <rect x="68.9" y="213.8" width="9.4" height="9.4" fill="#444"/>
  <path d="M70.6 245.5 V254.7 H79.6 M67.6 248.4 H76.8 V257.4" fill="none" stroke="#111" stroke-width="1.9"/>
  <path d="M70.8 254.4 L78.6 246.4" stroke="#111" stroke-width="1.1"/>
</svg>
<div class="a" style="left:987px;top:309px;width:215px;height:35px;background:rgba(235,238,240,.55);border-radius:5px;box-shadow:0 0 3px rgba(0,0,0,.12)"></div>
<div class="a" style="left:993.5px;top:314px;font-size:9.8px;line-height:11px;font-weight:bold;color:#555">Unique count of apache2.access.remote_ip</div>
<div class="a" style="left:993px;top:328px;width:9px;height:9px;border-radius:50%;background:#fe5a1a;border:1px solid #b42800"></div>
<div class="a" style="left:1006px;top:327px;font-size:10px;line-height:11px;color:#555">0 – 1</div>
<div class="a" style="left:965px;top:353px;width:246px;height:15px;background:rgba(255,255,255,.55)"></div>
<div class="a" style="left:970px;top:355px;font-size:10px;line-height:11px;color:#333"><span style="color:#333">©</span> <span style="color:#0079a5">OpenStreetMap</span> contributors , <span style="color:#0079a5">Elastic Maps Service</span></div>

<!-- RESPONSE CODES CHART -->
<svg class="a" style="left:0;top:0" width="1215" height="1199" viewBox="0 0 1215 1199">
 <g stroke="#d4d4d4" stroke-width="1" fill="none">
  <path d="M94.5 397 V505 M89 403.5 H94.5 M89 435.5 H94.5 M89 467.5 H94.5 M89 499.5 H862.5 V505"/>
  <path d="M163.5 499.5 V505 M259.5 499.5 V505 M354.5 499.5 V505 M451.5 499.5 V505 M548.5 499.5 V505 M642.5 499.5 V505 M738.5 499.5 V505"/>
  <path d="M88.5 844 V951 M83 855.5 H88.5 M83 879 H88.5 M83 901.5 H88.5 M83 924.5 H88.5 M83 947.5 H1054.5 V953"/>
  <path d="M176.5 947.5 V953 M296.5 947.5 V953 M416.5 947.5 V953 M538.5 947.5 V953 M659.5 947.5 V953 M779.5 947.5 V953 M899.5 947.5 V953 M1021.5 947.5 V953"/>
 </g>
 <rect x="541.5" y="442" width="7.5" height="57.5" fill="#f4a465"/>
 <rect x="541.5" y="409.5" width="7.5" height="32.5" fill="#88b47a"/>
 <rect x="541.5" y="403" width="7.5" height="6.5" fill="#8365c9"/>
 <rect x="652.5" y="879" width="8.5" height="68.5" fill="#ca6cc4"/>
 <rect x="652.5" y="845" width="8.5" height="34" fill="#6fcc7c"/>
 <!-- os donut -->
 <g transform="translate(1115 444.8)">
  <path d="M0 -32.7 A32.7 32.7 0 0 1 0 32.7 L0 24.6 A24.6 24.6 0 0 0 0 -24.6 Z" fill="#bc52bc"/>
  <path d="M0 32.7 A32.7 32.7 0 0 1 0 -32.7 L0 -24.6 A24.6 24.6 0 0 0 0 24.6 Z" fill="#9e3533"/>
  <path d="M0 -40 A40 40 0 0 1 0 40 L0 34.2 A34.2 34.2 0 0 0 0 -34.2 Z" fill="#daa05d"/>
  <path d="M0 -41 V41" stroke="#fff" stroke-width="1.2"/>
 </g>
 <!-- browsers donut -->
 <g transform="translate(1018 668.7)" stroke="#fff" stroke-width="1.2">
  <path d="M0 -67 A67 67 0 0 1 58.02 33.5 L42.87 24.75 A49.5 49.5 0 0 0 0 -49.5 Z" fill="#c4b23a"/>
  <path d="M58.02 33.5 A67 67 0 0 1 -58.02 33.5 L-42.87 24.75 A49.5 49.5 0 0 0 42.87 24.75 Z" fill="#3f4dc4"/>
  <path d="M-58.02 33.5 A67 67 0 0 1 0 -67 L0 -49.5 A49.5 49.5 0 0 0 -42.87 24.75 Z" fill="#c1503b"/>
  <path d="M0 -82.7 A82.7 82.7 0 0 1 71.62 41.35 L58.89 34 A68 68 0 0 0 0 -68 Z" fill="#3aafc1"/>
  <path d="M71.62 41.35 A82.7 82.7 0 0 1 -71.62 41.35 L-58.89 34 A68 68 0 0 0 58.89 34 Z" fill="#6dc33a"/>
  <path d="M-71.62 41.35 A82.7 82.7 0 0 1 0 -82.7 L0 -68 A68 68 0 0 0 -58.89 34 Z" fill="#8f3ac4"/>
 </g>
 <!-- bubbles -->
 <circle cx="114.6" cy="684.7" r="53.5" fill="#7eb26d"/>
 <circle cx="238.1" cy="684.7" r="53.5" fill="#ef843c"/>
 <circle cx="361.6" cy="684.7" r="53.5" fill="#ef843c"/>
 <circle cx="485.1" cy="684.7" r="53.5" fill="#ef843c"/>
 <circle cx="608.6" cy="684.7" r="53.5" fill="#ef843c"/>
</svg>
<div class="a" style="left:55px;top:436px;width:16px;height:24px">
  <div style="position:absolute;left:8px;top:12px;transform:translate(-50%,-50%) rotate(-90deg);font-size:10.7px;line-height:11px;font-weight:bold;color:#6c7a89">Count</div>
</div>
<div class="a" style="left:55px;top:884px;width:16px;height:24px">
  <div style="position:absolute;left:8px;top:12px;transform:translate(-50%,-50%) rotate(-90deg);font-size:10.7px;line-height:11px;font-weight:bold;color:#6c7a89">Count</div>
</div>
<div class="a tick" style="left:46.5px;width:40px;text-align:right;top:398.5px">15</div>
<div class="a tick" style="left:46.5px;width:40px;text-align:right;top:430.5px">10</div>
<div class="a tick" style="left:46.5px;width:40px;text-align:right;top:462.5px">5</div>
<div class="a tick" style="left:46.5px;width:40px;text-align:right;top:494.5px">0</div>
<div class="a tick" style="left:133.5px;width:60px;text-align:center;top:506.5px">2015-12-31</div>
<div class="a tick" style="left:229.5px;width:60px;text-align:center;top:506.5px">2016-03-31</div>
<div class="a tick" style="left:324.5px;width:60px;text-align:center;top:506.5px">2016-06-30</div>
<div class="a tick" style="left:421.5px;width:60px;text-align:center;top:506.5px">2016-09-30</div>
<div class="a tick" style="left:518.5px;width:60px;text-align:center;top:506.5px">2016-12-31</div>
<div class="a tick" style="left:612.5px;width:60px;text-align:center;top:506.5px">2017-03-31</div>
<div class="a tick" style="left:708.5px;width:60px;text-align:center;top:506.5px">2017-06-30</div>
<div class="a" style="left:378px;width:200px;text-align:center;top:526px;font-size:11.4px;line-height:12px;font-weight:bold;color:#6c7a89">@timestamp per week</div>
<div class="a tick" style="left:41px;width:40px;text-align:right;top:850.5px">8</div>
<div class="a tick" style="left:41px;width:40px;text-align:right;top:874px">6</div>
<div class="a tick" style="left:41px;width:40px;text-align:right;top:896.5px">4</div>
<div class="a tick" style="left:41px;width:40px;text-align:right;top:919.5px">2</div>
<div class="a tick" style="left:41px;width:40px;text-align:right;top:942.5px">0</div>
<div class="a tick" style="left:146.5px;width:60px;text-align:center;top:954px">2015-12-31</div>
<div class="a tick" style="left:266.5px;width:60px;text-align:center;top:954px">2016-03-31</div>
<div class="a tick" style="left:386.5px;width:60px;text-align:center;top:954px">2016-06-30</div>
<div class="a tick" style="left:508.5px;width:60px;text-align:center;top:954px">2016-09-30</div>
<div class="a tick" style="left:629.5px;width:60px;text-align:center;top:954px">2016-12-31</div>
<div class="a tick" style="left:749.5px;width:60px;text-align:center;top:954px">2017-03-31</div>
<div class="a tick" style="left:869.5px;width:60px;text-align:center;top:954px">2017-06-30</div>
<div class="a tick" style="left:991.5px;width:60px;text-align:center;top:954px">2017-09-30</div>
<div class="a" style="left:472px;width:200px;text-align:center;top:974px;font-size:11.4px;line-height:12px;font-weight:bold;color:#6c7a89">@timestamp per week</div>

<svg class="a" style="left:1000px;top:372px" width="14" height="14" viewBox="0 0 14 14"><g fill="#555"><path d="M11.2 2.8 L6.8 2.8 L11.2 7.2 Z"/><path d="M2.8 11.2 L2.8 6.8 L7.2 11.2 Z"/><path d="M9.8 4.2 L4.2 9.8" stroke="#555" stroke-width="1.5" stroke-dasharray="2.2 1.2"/></g></svg>
<svg class="a" style="left:1193.5px;top:372px" width="14" height="14" viewBox="0 0 14 14"><g fill="#555"><path d="M11.2 2.8 L6.8 2.8 L11.2 7.2 Z"/><path d="M2.8 11.2 L2.8 6.8 L7.2 11.2 Z"/><path d="M9.8 4.2 L4.2 9.8" stroke="#555" stroke-width="1.5" stroke-dasharray="2.2 1.2"/></g></svg>
<svg class="a" style="left:807px;top:550.5px" width="14" height="14" viewBox="0 0 14 14"><g fill="#555"><path d="M11.2 2.8 L6.8 2.8 L11.2 7.2 Z"/><path d="M2.8 11.2 L2.8 6.8 L7.2 11.2 Z"/><path d="M9.8 4.2 L4.2 9.8" stroke="#555" stroke-width="1.5" stroke-dasharray="2.2 1.2"/></g></svg>
<svg class="a" style="left:1193.5px;top:550.5px" width="14" height="14" viewBox="0 0 14 14"><g fill="#555"><path d="M11.2 2.8 L6.8 2.8 L11.2 7.2 Z"/><path d="M2.8 11.2 L2.8 6.8 L7.2 11.2 Z"/><path d="M9.8 4.2 L4.2 9.8" stroke="#555" stroke-width="1.5" stroke-dasharray="2.2 1.2"/></g></svg>
<svg class="a" style="left:1193.5px;top:818.5px" width="14" height="14" viewBox="0 0 14 14"><g fill="#555"><path d="M11.2 2.8 L6.8 2.8 L11.2 7.2 Z"/><path d="M2.8 11.2 L2.8 6.8 L7.2 11.2 Z"/><path d="M9.8 4.2 L4.2 9.8" stroke="#555" stroke-width="1.5" stroke-dasharray="2.2 1.2"/></g></svg>
<svg class="a" style="left:1193.5px;top:997px" width="14" height="14" viewBox="0 0 14 14"><g fill="#555"><path d="M11.2 2.8 L6.8 2.8 L11.2 7.2 Z"/><path d="M2.8 11.2 L2.8 6.8 L7.2 11.2 Z"/><path d="M9.8 4.2 L4.2 9.8" stroke="#555" stroke-width="1.5" stroke-dasharray="2.2 1.2"/></g></svg>
<div class="ptitle" style="left:1024px;top:373px">Operating systems breakd...</div>
<div class="ptitle" style="left:58px;top:552px">Top URLs by response code [Filebeat Apache2]</div>
<div class="ptitle" style="left:831px;top:552px">Browsers breakdown [Filebeat Apache2]</div>
<div class="ptitle" style="left:58px;top:821px">Error logs over time [Filebeat Apache2]</div>
<div class="ptitle" style="left:58px;top:1000px">Apache errors log [Filebeat Apache2]</div>
<svg class="a" style="left:866.2px;top:396.8px" width="14" height="14" viewBox="-7 -7 14 14"><circle r="6" fill="#b5b5b5"/><path d="M-1.6 -3 L1.6 0 L-1.6 3" fill="none" stroke="#fff" stroke-width="1.8"/></svg>
<div class="a" style="left:885.9px;top:396.5px;width:9.0px;height:9.0px;border-radius:50%;background:#ef843c"></div>
<div class="a" style="left:898px;top:395px;font-size:10.9px;line-height:12px;color:#444">404</div>
<div class="a" style="left:885.9px;top:413.7px;width:9.0px;height:9.0px;border-radius:50%;background:#629e51"></div>
<div class="a" style="left:898px;top:412.2px;font-size:10.9px;line-height:12px;color:#444">200</div>
<div class="a" style="left:885.9px;top:430.5px;width:9.0px;height:9.0px;border-radius:50%;background:#6639ba"></div>
<div class="a" style="left:898px;top:429px;font-size:10.9px;line-height:12px;color:#444">408</div>
<svg class="a" style="left:1044.3px;top:510.79999999999995px" width="14" height="14" viewBox="-7 -7 14 14"><circle r="6" fill="#b5b5b5"/><path d="M-3 -1.4 L0 1.6 L3 -1.4" fill="none" stroke="#fff" stroke-width="1.8"/></svg>
<div class="a" style="left:1044.5px;top:532.2px;width:9.0px;height:9.0px;border-radius:50%;background:#bc52bc"></div>
<div class="a" style="left:1057px;top:530.7px;font-size:10.9px;line-height:12px;color:#444">Mac OS X</div>
<div class="a" style="left:1108.5px;top:532.2px;width:9.0px;height:9.0px;border-radius:50%;background:#9e3533"></div>
<div class="a" style="left:1121px;top:530.7px;font-size:10.9px;line-height:12px;color:#444">Other</div>
<div class="a" style="left:1155.5px;top:532.2px;width:9.0px;height:9.0px;border-radius:50%;background:#daa05d"></div>
<div class="a" style="left:1168px;top:530.7px;font-size:10.9px;line-height:12px;color:#444">10</div>
<svg class="a" style="left:673px;top:575.8px" width="14" height="14" viewBox="-7 -7 14 14"><circle r="6" fill="#b5b5b5"/><path d="M-1.6 -3 L1.6 0 L-1.6 3" fill="none" stroke="#fff" stroke-width="1.8"/></svg>
<div class="a" style="left:692.6px;top:575.5px;width:9.0px;height:9.0px;border-radius:50%;background:#7eb26d"></div>
<div class="a" style="left:704.8px;top:574px;font-size:10.9px;line-height:12px;color:#444">200</div>
<div class="a" style="left:692.6px;top:592.5px;width:9.0px;height:9.0px;border-radius:50%;background:#ef843c"></div>
<div class="a" style="left:704.8px;top:591px;font-size:10.9px;line-height:12px;color:#444">404</div>
<div class="a" style="left:54.599999999999994px;width:120px;text-align:center;top:796.3px;font-size:10.1px;line-height:12px;color:#6c7a89">/: apache2.access.url</div>
<div class="a" style="left:178.1px;width:120px;text-align:center;top:796.3px;font-size:10.1px;line-height:12px;color:#6c7a89">/favicon.ico: apach...</div>
<div class="a" style="left:301.6px;width:120px;text-align:center;top:796.3px;font-size:10.1px;line-height:12px;color:#6c7a89">/crap: apache2.acce...</div>
<div class="a" style="left:425.1px;width:120px;text-align:center;top:796.3px;font-size:10.1px;line-height:12px;color:#6c7a89">/hello: apache2.acc...</div>
<div class="a" style="left:548.6px;width:120px;text-align:center;top:796.3px;font-size:10.1px;line-height:12px;color:#6c7a89">/hmm: apache2.acc...</div>
<svg class="a" style="left:851px;top:778.8px" width="14" height="14" viewBox="-7 -7 14 14"><circle r="6" fill="#b5b5b5"/><path d="M-3 -1.4 L0 1.6 L3 -1.4" fill="none" stroke="#fff" stroke-width="1.8"/></svg>
<div class="a" style="left:850.8px;top:801.8px;width:9.0px;height:9.0px;border-radius:50%;background:#c4b23a"></div>
<div class="a" style="left:863.0px;top:799.6px;font-size:11.1px;line-height:12px;color:#444">Chrome</div>
<div class="a" style="left:908.5px;top:801.8px;width:9.0px;height:9.0px;border-radius:50%;background:#3f4dc4"></div>
<div class="a" style="left:920.7px;top:799.6px;font-size:11.1px;line-height:12px;color:#444">Firefox</div>
<div class="a" style="left:961.0px;top:801.8px;width:9.0px;height:9.0px;border-radius:50%;background:#c1503b"></div>
<div class="a" style="left:973.2px;top:799.6px;font-size:11.1px;line-height:12px;color:#444">Wget</div>
<div class="a" style="left:1003.5px;top:801.8px;width:9.0px;height:9.0px;border-radius:50%;background:#3aafc1"></div>
<div class="a" style="left:1015.7px;top:799.6px;font-size:11.1px;line-height:12px;color:#444">54</div>
<div class="a" style="left:1032.5px;top:801.8px;width:9.0px;height:9.0px;border-radius:50%;background:#6dc33a"></div>
<div class="a" style="left:1044.7px;top:799.6px;font-size:11.1px;line-height:12px;color:#444">50</div>
<div class="a" style="left:1062.5px;top:801.8px;width:9.0px;height:9.0px;border-radius:50%;background:#8f3ac4"></div>
<div class="a" style="left:1074.7px;top:799.6px;font-size:11.1px;line-height:12px;color:#444">1</div>
<svg class="a" style="left:1059.5px;top:844.6px" width="14" height="14" viewBox="-7 -7 14 14"><circle r="6" fill="#b5b5b5"/><path d="M-1.6 -3 L1.6 0 L-1.6 3" fill="none" stroke="#fff" stroke-width="1.8"/></svg>
<div class="a" style="left:1078.8px;top:844.5px;width:9.0px;height:9.0px;border-radius:50%;background:#ba43a9"></div>
<div class="a" style="left:1091px;top:843px;font-size:10.9px;line-height:12px;color:#444">error</div>
<div class="a" style="left:1078.8px;top:861.5px;width:9.0px;height:9.0px;border-radius:50%;background:#3cb54a"></div>
<div class="a" style="left:1091px;top:860px;font-size:10.9px;line-height:12px;color:#444">notice</div>
<div class="a" style="left:1071.5px;top:1026px;font-size:12.7px;line-height:14px;color:#444">1–9 of 9</div>
<div class="a" style="left:1127.5px;top:1019px;width:30px;height:27px;background:#f5f5f5;border-radius:4px"></div>
<div class="a" style="left:1161px;top:1019px;width:30px;height:27px;background:#f5f5f5;border-radius:4px"></div>
<svg class="a" style="left:1127px;top:1019px" width="64" height="27" viewBox="1127 1019 64 27"><path d="M1144.5 1027.5 L1140.5 1032 L1144.5 1036.5 M1173.5 1027.5 L1177.5 1032 L1173.5 1036.5" fill="none" stroke="#777" stroke-width="2.2"/></svg>
<div class="a" style="left:1195px;top:1014px;width:1px;height:185px;background:#e8e8e8"></div>
<div class="a" style="left:1199px;top:1016px;width:9px;height:137px;background:#c2c2c2;border-radius:5px"></div>
<div class="a" style="left:87.1px;top:1055px;font-size:11.2px;line-height:12px;font-weight:bold;color:#2d2d2d">Time</div>
<div class="a" style="left:275.7px;top:1055px;font-size:11.2px;line-height:12px;font-weight:bold;color:#2d2d2d">apache2.error.client</div>
<div class="a" style="left:440px;top:1055px;font-size:11.2px;line-height:12px;font-weight:bold;color:#2d2d2d">apache2.error.level</div>
<div class="a" style="left:610px;top:1055px;font-size:11.2px;line-height:12px;font-weight:bold;color:#2d2d2d">apache2.error.module</div>
<div class="a" style="left:796px;top:1055px;font-size:11.2px;line-height:12px;font-weight:bold;color:#2d2d2d">apache2.error.message</div>
<svg class="a" style="left:115px;top:1060px" width="10" height="6" viewBox="0 0 10 6"><path d="M1.5 1.5 L8.5 1.5 L5 5 Z" fill="#b0b0b0"/></svg>
<div class="a" style="left:47px;top:1160px;width:1148px;height:39px;background:linear-gradient(rgba(0,0,0,0),rgba(0,0,0,.07))"></div>
<div class="a" style="left:53px;top:1076px;width:1142px;height:1px;background:#d9d9d9"></div>
<svg class="a" style="left:62px;top:1087px" width="8" height="10" viewBox="0 0 8 10"><path d="M2.2 1.8 L6 5 L2.2 8.2 Z" fill="#222"/></svg>
<div class="a" style="left:87.1px;top:1085.3px;font-size:11.1px;line-height:12px;color:#2d2d2d">December 26th 2016, 08:22:17.000</div>
<div class="a" style="left:275.7px;top:1085.3px;font-size:11.1px;line-height:12px;color:#2d2d2d">192.168.33.1</div>
<div class="a" style="left:440px;top:1085.3px;font-size:11.1px;line-height:12px;color:#2d2d2d">error</div>
<div class="a" style="left:613px;top:1085.3px;font-size:11.1px;line-height:12px;color:#999">-</div>
<div class="a" style="left:796px;top:1085.3px;font-size:11.1px;line-height:12px;color:#2d2d2d">File does not exist: /var/www/crap</div>
<div class="a" style="left:53px;top:1109.5px;width:1142px;height:1px;background:#d9d9d9"></div>
<svg class="a" style="left:62px;top:1120.5px" width="8" height="10" viewBox="0 0 8 10"><path d="M2.2 1.8 L6 5 L2.2 8.2 Z" fill="#222"/></svg>
<div class="a" style="left:87.1px;top:1118.8px;font-size:11.1px;line-height:12px;color:#2d2d2d">December 26th 2016, 08:22:13.000</div>
<div class="a" style="left:275.7px;top:1118.8px;font-size:11.1px;line-height:12px;color:#2d2d2d">192.168.33.1</div>
<div class="a" style="left:440px;top:1118.8px;font-size:11.1px;line-height:12px;color:#2d2d2d">error</div>
<div class="a" style="left:613px;top:1118.8px;font-size:11.1px;line-height:12px;color:#999">-</div>
<div class="a" style="left:796px;top:1118.8px;font-size:11.1px;line-height:12px;color:#2d2d2d">File does not exist: /var/www/hello</div>
<div class="a" style="left:53px;top:1143px;width:1142px;height:1px;background:#d9d9d9"></div>
<svg class="a" style="left:62px;top:1154px" width="8" height="10" viewBox="0 0 8 10"><path d="M2.2 1.8 L6 5 L2.2 8.2 Z" fill="#222"/></svg>
<div class="a" style="left:87.1px;top:1152.3px;font-size:11.1px;line-height:12px;color:#2d2d2d">December 26th 2016, 08:22:10.000</div>
<div class="a" style="left:275.7px;top:1152.3px;font-size:11.1px;line-height:12px;color:#2d2d2d">192.168.33.1</div>
<div class="a" style="left:440px;top:1152.3px;font-size:11.1px;line-height:12px;color:#2d2d2d">error</div>
<div class="a" style="left:613px;top:1152.3px;font-size:11.1px;line-height:12px;color:#999">-</div>
<div class="a" style="left:796px;top:1152.3px;font-size:11.1px;line-height:12px;color:#2d2d2d">File does not exist: /var/www/test</div>
<div class="a" style="left:53px;top:1176px;width:1142px;height:1px;background:#d9d9d9"></div>
<svg class="a" style="left:62px;top:1187px" width="8" height="10" viewBox="0 0 8 10"><path d="M2.2 1.8 L6 5 L2.2 8.2 Z" fill="#222"/></svg>
<div class="a" style="left:87.1px;top:1185.3px;font-size:11.1px;line-height:12px;color:#2d2d2d">December 26th 2016, 08:22:08.000</div>
<div class="a" style="left:275.7px;top:1185.3px;font-size:11.1px;line-height:12px;color:#2d2d2d">192.168.33.1</div>
<div class="a" style="left:440px;top:1185.3px;font-size:11.1px;line-height:12px;color:#2d2d2d">error</div>
<div class="a" style="left:613px;top:1185.3px;font-size:11.1px;line-height:12px;color:#999">-</div>
<div class="a" style="left:796px;top:1185.3px;font-size:11.1px;line-height:12px;color:#2d2d2d">File does not exist: /var/www/favicon.ico</div>
<div class="a" style="left:0;top:1164px;width:47px;height:1px;background:#8fb3c0"></div>
</body></html>
